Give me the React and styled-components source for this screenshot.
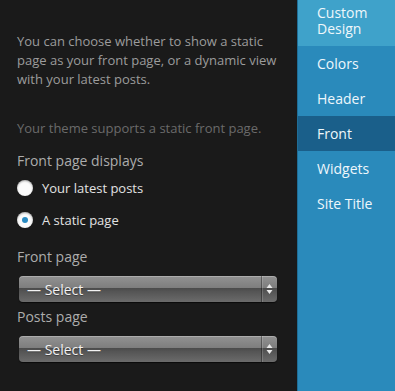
import React from 'react';
import styled, { createGlobalStyle } from 'styled-components';

const GlobalStyle = createGlobalStyle`
  html, body {
    margin: 0;
    padding: 0;
    background: #1a1a1a;
  }
  body {
    font-family: "Open Sans", "Liberation Sans", sans-serif;
  }
`;

const Layout = styled.div`
  display: flex;
  width: 395px;
  height: 391px;
  overflow: hidden;
`;

const Panel = styled.div`
  flex: 0 0 296px;
  background: #1a1a1a;
  padding: 32px 20px 0 17px;
  box-sizing: border-box;
`;

const Intro = styled.p`
  margin: 0;
  font-size: 13px;
  line-height: 19px;
  color: #9c9c9c;
`;

const Note = styled.p`
  margin: 30px 0 0;
  font-size: 13px;
  line-height: 19px;
  color: #6a6a6a;
`;

const Label = styled.div`
  font-size: 14px;
  line-height: 19px;
  color: #acacac;
  margin-top: ${p => p.$top}px;
`;

const RadioRow = styled.label`
  display: flex;
  align-items: center;
  gap: 9px;
  height: 20px;
  margin-top: ${p => p.$top}px;
  font-size: 13px;
  color: #e2e2e2;
`;

const RadioDot = styled.span`
  width: 16px;
  height: 16px;
  border-radius: 50%;
  background: #fbfbfb;
  box-shadow: inset 0 1px 2px rgba(0, 0, 0, 0.35);
  display: flex;
  align-items: center;
  justify-content: center;

  &::after {
    content: '';
    width: 6px;
    height: 6px;
    border-radius: 50%;
    background: ${p => (p.$checked ? '#2a8bc2' : 'transparent')};
  }
`;

const Select = styled.div`
  margin: ${p => p.$top}px 0 0 2px;
  width: 258px;
  height: 26px;
  border-radius: 4px;
  box-sizing: border-box;
  display: flex;
  align-items: stretch;
  background: linear-gradient(
    to bottom,
    #929292 0%,
    #7e7e7e 45%,
    #4c4c4c 48%,
    #555 60%,
    #6b6b6b 100%
  );
  box-shadow: inset 0 1px 0 rgba(255, 255, 255, 0.25), 0 1px 1px rgba(0, 0, 0, 0.6);
  color: #f2f2f2;
  font-size: 14px;
`;

const SelectText = styled.span`
  flex: 1;
  display: flex;
  align-items: center;
  padding-left: 8px;
  text-shadow: 0 1px 0 rgba(0, 0, 0, 0.3);
`;

const ArrowBox = styled.span`
  width: 15px;
  border-left: 1px solid rgba(0, 0, 0, 0.35);
  box-shadow: inset 1px 0 0 rgba(255, 255, 255, 0.15);
  display: flex;
  align-items: center;
  justify-content: center;
`;

const Sidebar = styled.nav`
  flex: 1;
  background: #2a8abb;
  border-left: 1px solid #1f6d96;
  display: flex;
  flex-direction: column;
`;

const NavItem = styled.div`
  padding: ${p => (p.$tall ? '5px 20px 0 19px' : '0 20px 0 19px')};
  height: ${p => (p.$tall ? '46px' : '35px')};
  box-sizing: border-box;
  display: flex;
  align-items: ${p => (p.$tall ? 'flex-start' : 'center')};
  font-size: 14px;
  line-height: 16px;
  color: #eef7fb;
  background: ${p => (p.$tone === 'top' ? '#3fa2ca' : p.$tone === 'active' ? '#1a5f8a' : 'transparent')};
`;

const Arrows = () => (
  <svg width="7" height="12" viewBox="0 0 7 12">
    <path d="M3.5 1L6.5 5H0.5Z" fill="#e8e8e8" />
    <path d="M3.5 11L6.5 7H0.5Z" fill="#e8e8e8" />
  </svg>
);

const SelectBox = ({ top }) => (
  <Select $top={top}>
    <SelectText>— Select —</SelectText>
    <ArrowBox>
      <Arrows />
    </ArrowBox>
  </Select>
);

export default function App() {
  return (
    <>
      <GlobalStyle />
      <Layout>
        <Panel>
          <Intro>
            You can choose whether to show a static page as your front page, or a dynamic view
            with your latest posts.
          </Intro>
          <Note>Your theme supports a static front page.</Note>
          <Label $top={13}>Front page displays</Label>
          <RadioRow $top={8}>
            <RadioDot />
            Your latest posts
          </RadioRow>
          <RadioRow $top={12}>
            <RadioDot $checked />
            A static page
          </RadioRow>
          <Label $top={17}>Front page</Label>
          <SelectBox top={10} />
          <Label $top={5}>Posts page</Label>
          <SelectBox top={10} />
        </Panel>
        <Sidebar>
          <NavItem $tall $tone="top">Custom<br />Design</NavItem>
          <NavItem>Colors</NavItem>
          <NavItem>Header</NavItem>
          <NavItem $tone="active">Front</NavItem>
          <NavItem>Widgets</NavItem>
          <NavItem>Site Title</NavItem>
        </Sidebar>
      </Layout>
    </>
  );
}
